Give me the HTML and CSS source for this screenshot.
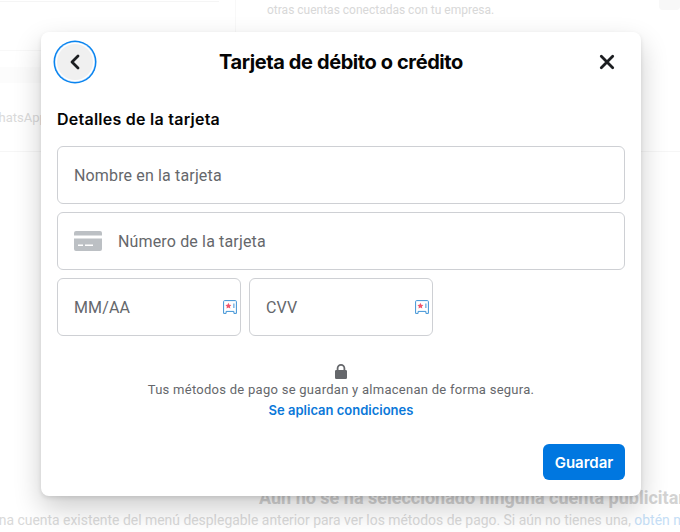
FILE: index.html
```html
<!DOCTYPE html>
<html lang="es">
<head>
<meta charset="utf-8">
<title>Tarjeta de débito o crédito</title>
<link rel="stylesheet" href="styles.css">
</head>
<body>
<div class="page">
  <div class="backdrop">
    <div class="bg-top">
      <div class="bg-left">
        <div class="bg-rule-a"></div>
        <div class="bg-rule-b"></div>
        <div class="bg-band"></div>
        <div class="bg-whats">WhatsApp</div>
      </div>
      <div class="bg-right">
        <p class="bg-note">otras cuentas conectadas con tu empresa.</p>
        <div class="bg-pill"></div>
      </div>
    </div>
    <div class="bg-bottom">
      <p class="bg-title">Aún no se ha seleccionado ninguna cuenta publicitaria</p>
      <p class="bg-desc">Selecciona una cuenta existente del menú desplegable anterior para ver los métodos de pago. Si aún no tienes una, <span class="bg-link">obtén más información</span></p>
    </div>
  </div>

  <section class="modal">
    <header class="modal-head">
      <button class="round back" aria-label="Atrás">
        <svg width="16" height="18" viewBox="0 0 16 18"><path d="M11 3 5 9l6 6" fill="none" stroke="#1c1e21" stroke-width="2.800" stroke-linecap="round" stroke-linejoin="round"/></svg>
      </button>
      <h1 class="modal-title">Tarjeta de débito o crédito</h1>
      <button class="round close" aria-label="Cerrar">
        <svg width="16" height="16" viewBox="0 0 16 16"><path d="M2.300 2.300 13.700 13.700M13.700 2.300 2.300 13.700" fill="none" stroke="#1c1e21" stroke-width="2.800" stroke-linecap="round"/></svg>
      </button>
    </header>

    <div class="modal-body">
      <h2 class="section">Detalles de la tarjeta</h2>
      <div class="field">Nombre en la tarjeta</div>
      <div class="field">
        <svg class="card-icon" width="28" height="20" viewBox="0 0 28 20"><path d="M2 0h24a2 2 0 0 1 2 2v2.500H0V2a2 2 0 0 1 2-2ZM0 7.500h28V18a2 2 0 0 1-2 2H2a2 2 0 0 1-2-2Z" fill="#bcc0c4"/><path d="M4 13.600h5v1.400H4zM11 13.600h8v1.400h-8z" fill="#fff"/></svg>
        Número de la tarjeta
      </div>
      <div class="row">
        <div class="field small">MM/AA
          <svg class="cvv-icon" width="14" height="15" viewBox="0 0 14 15"><path d="M1.600.6h10.800a1 1 0 0 1 1 1v11.800h-2.500v-2H3.100v2H.6V1.600a1 1 0 0 1 1-1Z" fill="#fff" stroke="#3f93d6" stroke-width="1"/><path d="m5.400 2.800.9 1.900 2.100.3-1.500 1.400.4 2-1.900-1-1.900 1 .4-2L2.400 5l2.100-.3Z" fill="#f0566c"/><path d="M10.900 3.500v4.500" stroke="#3f93d6" stroke-width="1"/></svg>
        </div>
        <div class="field small">CVV
          <svg class="cvv-icon" width="14" height="15" viewBox="0 0 14 15"><path d="M1.600.6h10.800a1 1 0 0 1 1 1v11.800h-2.500v-2H3.100v2H.6V1.600a1 1 0 0 1 1-1Z" fill="#fff" stroke="#3f93d6" stroke-width="1"/><path d="m5.400 2.800.9 1.900 2.100.3-1.500 1.400.4 2-1.900-1-1.900 1 .4-2L2.400 5l2.100-.3Z" fill="#f0566c"/><path d="M10.900 3.500v4.500" stroke="#3f93d6" stroke-width="1"/></svg>
        </div>
      </div>
      <div class="secure">
        <svg width="12" height="15" viewBox="0 0 12 15"><path d="M6 0a4.300 4.300 0 0 0-4.300 4.300V6H1.300A1.300 1.300 0 0 0 0 7.300v6.400A1.300 1.300 0 0 0 1.300 15h9.400a1.300 1.300 0 0 0 1.300-1.300V7.300A1.300 1.300 0 0 0 10.700 6h-.4V4.300A4.300 4.300 0 0 0 6 0Zm2.500 6h-5V4.300a2.500 2.500 0 0 1 5 0Z" fill="#65676b"/></svg>
        <p class="secure-text">Tus métodos de pago se guardan y almacenan de forma segura.</p>
        <a class="terms">Se aplican condiciones</a>
      </div>
    </div>

    <footer class="modal-foot">
      <button class="save">Guardar</button>
    </footer>
  </section>
</div>
</body>
</html>
```

FILE: styles.css
```css
* { box-sizing: border-box; }

html, body {
  margin: 0;
  padding: 0;
  background: #fff;
}

.page {
  position: relative;
  width: 680px;
  height: 532px;
  overflow: hidden;
  font-family: Inter, Roboto, "Liberation Sans", sans-serif;
  color: #050505;
}

/* dimmed page behind the dialog */
.backdrop {
  display: flex;
  flex-direction: column;
  justify-content: space-between;
  height: 532px;
  font-family: Roboto, "Liberation Sans", sans-serif;
  background: #fff;
}

.bg-top {
  display: flex;
  height: 152px;
  border-bottom: 1px solid #f6f6f6;
}

.bg-left {
  width: 236px;
  flex: none;
  padding-top: 1px;
  border-right: 1px solid #f8f8f8;
}

.bg-rule-a {
  width: 219px;
  height: 1px;
  background: #f5f5f5;
}

.bg-rule-b {
  height: 1px;
  margin-top: 48px;
  background: #f8f8f8;
}

.bg-band {
  height: 16px;
  margin-top: 16px;
  background: #fcfcfc;
}

.bg-whats {
  margin: 27px 0 0 -13px;
  font-size: 13px;
  line-height: 16px;
  color: #dadada;
}

.bg-right {
  position: relative;
  flex: 1;
  padding-left: 31px;
}

.bg-note {
  margin: 2px 0 0;
  font-size: 12px;
  line-height: 16px;
  color: #d8d8d8;
  white-space: nowrap;
}

.bg-pill {
  position: absolute;
  top: -6px;
  right: 0;
  width: 21px;
  height: 16px;
  border-radius: 4px;
  background: #f8f8f8;
}

.bg-bottom {
  height: 44px;
  text-align: center;
  white-space: nowrap;
  display: flex;
  flex-direction: column;
  align-items: center;
}

.bg-title {
  margin: 0 0 0 259px;
  align-self: flex-start;
  font-size: 18px;
  font-weight: 700;
  line-height: 20px;
  color: #d3d3d3;
}

.bg-desc {
  margin: 4px 0 0 -80px;
  align-self: flex-start;
  font-size: 13.930px;
  line-height: 16px;
  color: #d9d9d9;
}

.bg-link {
  color: #c5def6;
}

/* dialog */
.modal {
  position: absolute;
  top: 32px;
  left: 41px;
  width: 600px;
  height: 464px;
  display: flex;
  flex-direction: column;
  background: #fff;
  border-radius: 8px;
  box-shadow: 0 12px 28px rgba(0, 0, 0, .2), 0 2px 4px rgba(0, 0, 0, .1);
}

.modal-head {
  display: flex;
  align-items: center;
  justify-content: space-between;
  height: 60px;
  padding: 0 16px;
}

.round {
  display: flex;
  align-items: center;
  justify-content: center;
  width: 36px;
  height: 36px;
  padding: 0;
  border: 0;
  border-radius: 50%;
  background: transparent;
}

.back {
  background: #f0f0f0;
  box-shadow: 0 0 0 1.500px #fff, 0 0 0 2px #bcdcfa, 0 0 0 3.500px #0a84ef;
}

.modal-title {
  margin: 0;
  font-size: 20px;
  font-weight: 700;
  line-height: 24px;
  letter-spacing: -.4px;
}

.modal-body {
  flex: 1;
  padding: 14px 16px 0;
}

.section {
  margin: 0 0 14px;
  font-size: 16px;
  font-weight: 600;
  line-height: 26px;
  letter-spacing: .25px;
}

.field {
  display: flex;
  align-items: center;
  position: relative;
  height: 58px;
  margin-bottom: 8px;
  padding: 0 16px;
  border: 1px solid #ced0d4;
  border-radius: 6px;
  font-family: Roboto, "Liberation Sans", sans-serif;
  font-size: 16px;
  letter-spacing: .15px;
  color: #65676b;
}

.card-icon {
  margin-right: 16px;
}

.row {
  display: flex;
  gap: 8px;
}

.small {
  width: 184px;
  justify-content: space-between;
  padding-right: 3px;
}

.cvv-icon {
  flex: none;
}

.secure {
  display: flex;
  flex-direction: column;
  align-items: center;
  padding-top: 20px;
}

.secure-text {
  margin: 1px 0 0;
  font-size: 13px;
  line-height: 20px;
  color: #65676b;
  font-family: Roboto, "Liberation Sans", sans-serif;
  letter-spacing: .27px;
}

.terms {
  margin-top: 0;
  font-size: 13px;
  font-weight: 600;
  line-height: 20px;
  color: #0a78d9;
}

.modal-foot {
  display: flex;
  justify-content: flex-end;
  padding: 0 16px 16px;
}

.save {
  width: 82px;
  height: 36px;
  border: 0;
  border-radius: 6px;
  background: #0077e0;
  color: #fff;
  font-family: Inter, Roboto, "Liberation Sans", sans-serif;
  font-size: 15px;
  font-weight: 600;
}
```
